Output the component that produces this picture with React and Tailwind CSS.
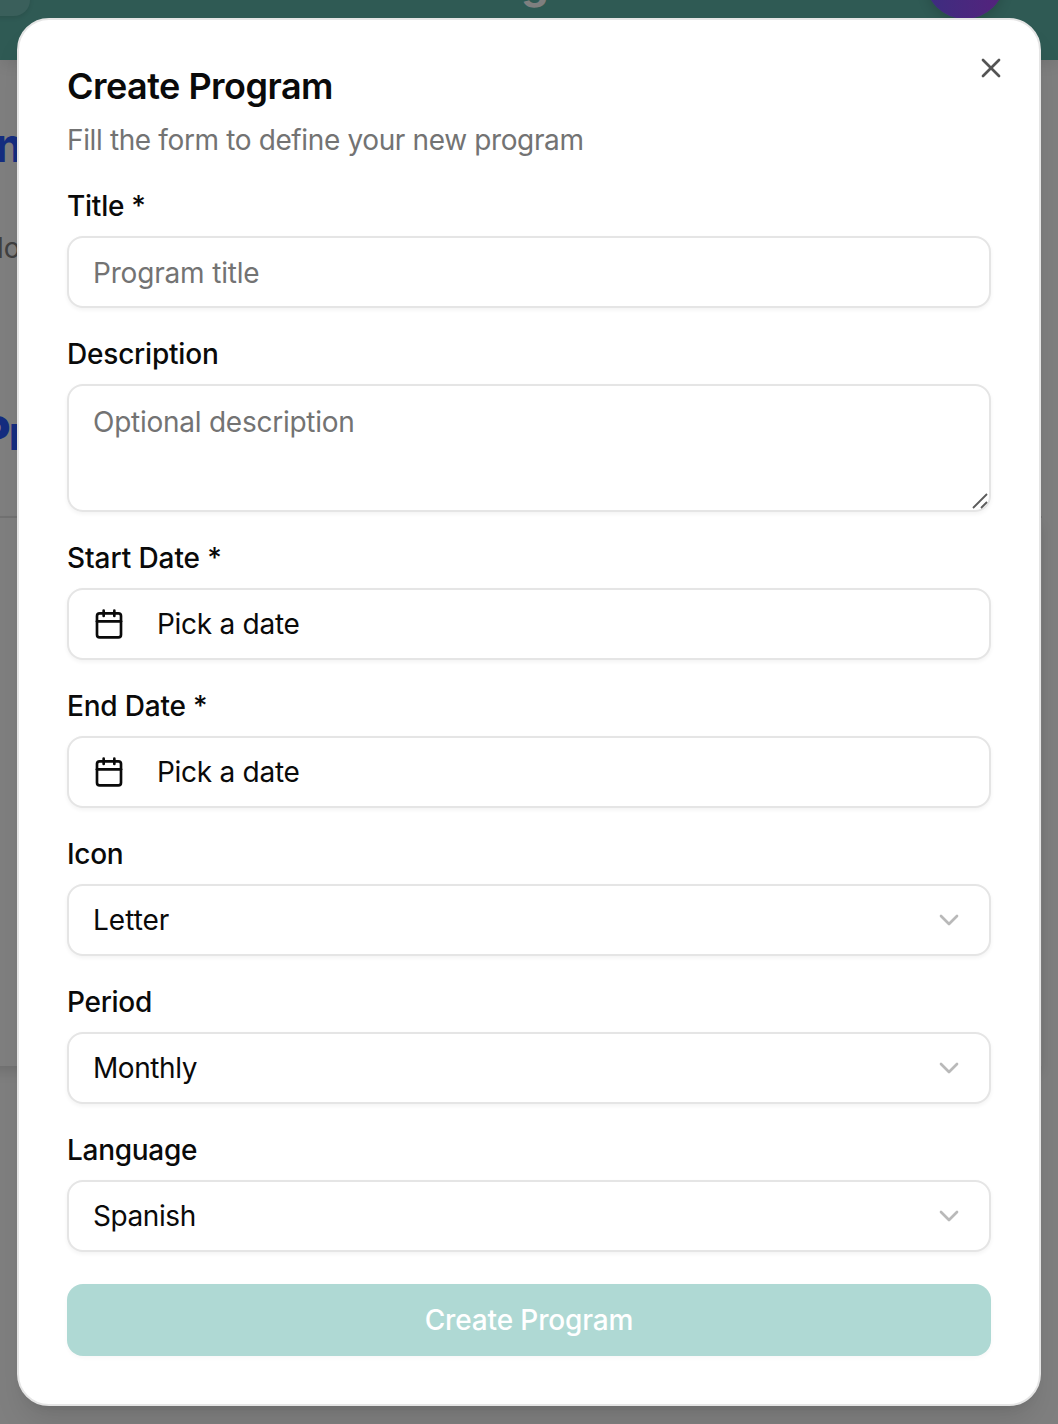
import { Calendar, ChevronDown, X } from "lucide-react";

const fieldBox =
  "flex h-[72px] w-full items-center rounded-2xl border-2 border-[#e5e5e5] bg-white px-6 text-[28px] leading-10 text-[#0a0a0a] shadow-[0_2px_4px_rgba(0,0,0,0.05)]";

function Field({ label, labelClass, children }) {
  return (
    <div className="flex flex-col gap-4">
      <label className={`text-[28px] leading-7 font-medium whitespace-nowrap ${labelClass}`}>{label}</label>
      {children}
    </div>
  );
}

function DateButton() {
  return (
    <button className={`${fieldBox} gap-8`}>
      <Calendar size={32} strokeWidth={2} />
      <span className="tracking-[-0.27px]">Pick a date</span>
    </button>
  );
}

function SelectButton({ value, valueClass = "tracking-[-0.43px]" }) {
  return (
    <button className={`${fieldBox} justify-between`}>
      <span className={valueClass}>{value}</span>
      <ChevronDown size={32} className="text-[#b9b9b9]" />
    </button>
  );
}

function Backdrop() {
  return (
    <div className="absolute inset-0 overflow-hidden bg-[#7f7f7f]">
      <div className="relative h-[60px] bg-[#2f5a54] shadow-[0_8px_12px_-2px_rgba(0,0,0,0.08)]">
        <div className="absolute -top-14 -left-12 h-[72px] w-[78px] rounded-2xl bg-[#3a5f5b] shadow-[0_2px_4px_rgba(0,0,0,0.1)]" />
        <span className="absolute -top-[40px] left-[521px] text-[44px] leading-[44px] font-bold text-[#7f7f7f]">g</span>
        <div className="absolute -top-[61px] left-[925px] size-20 rounded-full bg-linear-to-r from-[#3b2d80] to-[#55217c] shadow-[0_8px_12px_-2px_rgba(0,0,0,0.15)]" />
      </div>
      <span className="absolute top-[117px] left-[-6px] text-[47px] leading-[56px] font-extrabold text-[#152d80]">n</span>
      <span className="absolute top-[228px] left-[-3px] text-[28px] leading-10 text-[#404040]">lo</span>
      <span className="absolute top-[405px] left-[-20px] text-[47px] leading-[56px] font-extrabold tracking-[-2px] text-[#152d80]">Pr</span>
      <div className="absolute top-[516px] -left-10 h-[550px] w-[1082px] border-t-2 border-[#727272] shadow-[0_8px_12px_-2px_rgba(0,0,0,0.12)]" />
    </div>
  );
}

export default function App() {
  return (
    <div className='relative h-[1424px] w-[1058px] overflow-hidden pt-[18px] pl-[17px] font-["Inter","Liberation_Sans",sans-serif] antialiased'>
      <Backdrop />
      <div
        role="dialog"
        className="relative flex h-[1388px] w-[1024px] flex-col gap-8 rounded-[32px] border-2 border-[#e5e5e5] bg-white p-12 text-[#0a0a0a] shadow-[0_20px_30px_-6px_rgba(0,0,0,0.1),0_8px_12px_-8px_rgba(0,0,0,0.1)]"
      >
        <div className="flex flex-col gap-4">
          <h2 className="text-[36px] leading-9 font-semibold tracking-[-0.52px]">Create Program</h2>
          <p className="text-[28px] leading-10 tracking-[-0.37px] text-[#737373]">Fill the form to define your new program</p>
        </div>
        <Field label="Title *" labelClass="tracking-[-0.25px]">
          <input placeholder="Program title" className={`${fieldBox} pt-[2px] tracking-[-0.18px] placeholder:text-[#737373]`} />
        </Field>
        <Field label="Description" labelClass="tracking-[-0.2px]">
          <div className="relative h-32">
            <textarea
              placeholder="Optional description"
              className="h-32 w-full resize-none rounded-2xl border-2 border-[#e5e5e5] px-6 py-4 text-[28px] leading-10 tracking-[-0.25px] shadow-[0_2px_4px_rgba(0,0,0,0.05)] placeholder:text-[#737373]"
            />
            <svg className="absolute right-[2px] bottom-[2px]" width="18" height="18" viewBox="0 0 18 18" fill="none" stroke="#5c5c5c" strokeWidth="1.8">
              <path d="M2 16 16 2M10 16l6-6" />
            </svg>
          </div>
        </Field>
        <Field label="Start Date *" labelClass="tracking-[-0.08px]">
          <DateButton />
        </Field>
        <Field label="End Date *" labelClass="tracking-[-0.2px]">
          <DateButton />
        </Field>
        <Field label="Icon" labelClass="tracking-[-0.3px]">
          <SelectButton value="Letter" valueClass="tracking-normal" />
        </Field>
        <Field label="Period" labelClass="tracking-[-0.3px]">
          <SelectButton value="Monthly" />
        </Field>
        <Field label="Language" labelClass="tracking-[-0.28px]">
          <SelectButton value="Spanish" />
        </Field>
        <button className="h-[72px] w-full shrink-0 rounded-2xl bg-[#afd9d4] text-[28px] leading-10 font-medium tracking-[-0.14px] text-white shadow-[0_2px_4px_rgba(0,0,0,0.03)]">
          Create Program
        </button>
        <button aria-label="Close" className="absolute top-8 right-8 text-[#545454]">
          <X size={32} />
        </button>
      </div>
    </div>
  );
}
